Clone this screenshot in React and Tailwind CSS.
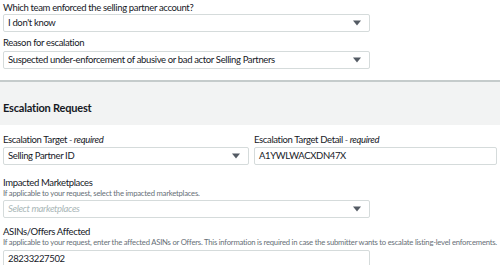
import React from 'react';

const Caret = () => (
  <svg width="8" height="6" viewBox="0 0 8 6" className="shrink-0">
    <path d="M0 0.5 H8 L4 5.5 Z" fill="#545b64" />
  </svg>
);

function Select({ value, placeholder, width }) {
  return (
    <div
      className={`${width} h-[18px] flex items-center justify-between pl-[4px] pr-[8px] bg-white border border-[#d5dbdb] rounded-[2px]`}
    >
      {placeholder ? (
        <span className="italic text-[#aab7b8]">{placeholder}</span>
      ) : (
        <span className="text-[#16191f]">{value}</span>
      )}
      <Caret />
    </div>
  );
}

function Label({ children, hint }) {
  return (
    <div className="h-[10px] leading-[10px] text-[#16191f] whitespace-nowrap">
      {children}
      {hint && <span className="italic"> - {hint}</span>}
    </div>
  );
}

function Help({ children }) {
  return (
    <div className="h-[11px] leading-[11px] text-[7.7px] tracking-[-0.23px] text-[#687078] whitespace-nowrap">
      {children}
    </div>
  );
}

export default function App() {
  return (
    <div className="w-[500px] h-[265px] overflow-hidden bg-white text-[9.5px] tracking-[-0.35px] font-['Lato','Open_Sans',sans-serif]">
      {/* Top fields */}
      <div className="px-[3px] pt-[3px] pb-[11px] flex flex-col">
        <Label>Which team enforced the selling partner account?</Label>
        <div className="mt-[1px]">
          <Select value="I don't know" width="w-[367px]" />
        </div>
        <div className="mt-[6px]">
          <Label>Reason for escalation</Label>
        </div>
        <div className="mt-[3px]">
          <Select
            value="Suspected under-enforcement of abusive or bad actor Selling Partners"
            width="w-[367px]"
          />
        </div>
      </div>

      {/* Section header */}
      <div className="border-t-2 border-[#c5cbcb] bg-[#f2f3f3] h-[45px] flex flex-col px-[3px] pt-[18px]">
        <h2 className="text-[11px] leading-[16px] tracking-[-0.2px] font-bold text-[#16191f]">
          Escalation Request
        </h2>
      </div>

      {/* Body */}
      <div className="px-[3px] pt-[10px] flex flex-col">
        <div className="flex gap-[5px]">
          <div className="w-[246px] flex flex-col gap-[2px]">
            <Label hint="required">Escalation Target</Label>
            <Select value="Selling Partner ID" width="w-[246px]" />
          </div>
          <div className="w-[243px] flex flex-col gap-[2px]">
            <Label hint="required">Escalation Target Detail</Label>
            <div className="h-[18px] flex items-center pl-[4px] border border-[#d5dbdb] rounded-[2px] text-[#16191f]">
              A1YWLWACXDN47X
            </div>
          </div>
        </div>

        <div className="mt-[13px]">
          <Label>Impacted Marketplaces</Label>
          <Help>If applicable to your request, select the impacted marketplaces.</Help>
          <div className="mt-[1px]">
            <Select placeholder="Select marketplaces" width="w-[367px]" />
          </div>
        </div>

        <div className="mt-[9px]">
          <Label>ASINs/Offers Affected</Label>
          <Help>
            If applicable to your request, enter the affected ASINs or Offers. This information is required in case the submitter wants to escalate listing-level enforcements.
          </Help>
          <div className="mt-[2px] w-[367px] h-[18px] flex items-center pl-[4px] border border-[#d5dbdb] rounded-[2px] text-[#16191f]">
            28233227502
          </div>
        </div>
      </div>
    </div>
  );
}
